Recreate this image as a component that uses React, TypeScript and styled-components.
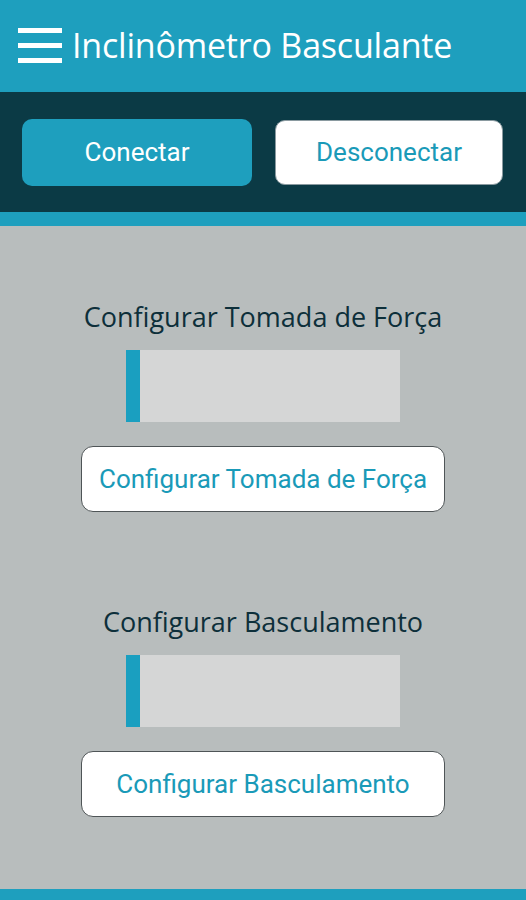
import styled, { createGlobalStyle } from "styled-components";

const GlobalStyle = createGlobalStyle`
  html, body {
    margin: 0;
    padding: 0;
    background: #b8bdbd;
  }
  #root {
    min-height: 100vh;
  }
`;

const Screen = styled.div`
  display: flex;
  flex-direction: column;
  height: 900px;
  overflow: hidden;
  background: #b8bdbd;
`;

const Header = styled.header`
  flex-shrink: 0;
  display: flex;
  align-items: center;
  gap: 10px;
  height: 92px;
  padding: 0 0 2px 18px;
  box-sizing: border-box;
  background: #1e9fbe;
`;

const Burger = styled.div`
  display: flex;
  flex-direction: column;
  gap: 10px;
  width: 44px;

  span {
    display: block;
    height: 5px;
    background: #ffffff;
  }
`;

const Title = styled.h1`
  margin: 0;
  font-family: "Open Sans", sans-serif;
  font-weight: 500;
  font-size: 34px;
  color: #ffffff;
  letter-spacing: -0.2px;
`;

const Toolbar = styled.div`
  flex-shrink: 0;
  display: grid;
  grid-template-columns: 230px 228px;
  gap: 23px;
  align-items: center;
  height: 120px;
  padding: 0 23px 0 22px;
  background: #0b3a45;
  border-bottom: 14px solid #1e9fbe;
`;

const ToolButton = styled.button<{ $primary?: boolean }>`
  height: ${(p) => (p.$primary ? "67px" : "65px")};
  border-radius: 10px;
  border: ${(p) => (p.$primary ? "none" : "1px solid #8a9aa0")};
  background: ${(p) => (p.$primary ? "#1e9fbe" : "#ffffff")};
  color: ${(p) => (p.$primary ? "#ffffff" : "#1a9ab8")};
  font-family: Roboto, sans-serif;
  font-size: 26px;
  padding: 0;
  cursor: pointer;
`;

const Main = styled.main`
  flex: 1;
  min-height: 0;
  display: flex;
  flex-direction: column;
  align-items: center;
  gap: 92px;
  padding-top: 73px;
  border-bottom: 11px solid #1e9fbe;
`;

const Section = styled.section`
  display: flex;
  flex-direction: column;
  align-items: center;
`;

const SectionTitle = styled.h2`
  margin: 0 0 15px;
  font-family: "Open Sans", sans-serif;
  font-weight: 500;
  font-size: 27px;
  line-height: 36px;
  color: #0d2f3a;
`;

const Track = styled.div`
  width: 274px;
  height: 72px;
  background: #d5d6d6;
  display: flex;
`;

const Fill = styled.div`
  background: #1a9fc0;
  height: 100%;
`;

const ActionButton = styled.button`
  margin-top: 24px;
  width: 364px;
  height: 66px;
  border-radius: 12px;
  border: 1.5px solid #4f5557;
  background: #ffffff;
  color: #1a9ab8;
  font-family: Roboto, sans-serif;
  font-size: 26px;
  padding: 0;
  cursor: pointer;
`;

const sections = [
  { label: "Configurar Tomada de Força", progress: 5 },
  { label: "Configurar Basculamento", progress: 5 },
];

export default function App() {
  return (
    <>
      <GlobalStyle />
      <Screen>
        <Header>
          <Burger>
            <span />
            <span />
            <span />
          </Burger>
          <Title>Inclinômetro Basculante</Title>
        </Header>
        <Toolbar>
          <ToolButton $primary>Conectar</ToolButton>
          <ToolButton>Desconectar</ToolButton>
        </Toolbar>
        <Main>
          {sections.map((s) => (
            <Section key={s.label}>
              <SectionTitle>{s.label}</SectionTitle>
              <Track>
                <Fill style={{ width: `${s.progress}%` }} />
              </Track>
              <ActionButton>{s.label}</ActionButton>
            </Section>
          ))}
        </Main>
      </Screen>
    </>
  );
}
